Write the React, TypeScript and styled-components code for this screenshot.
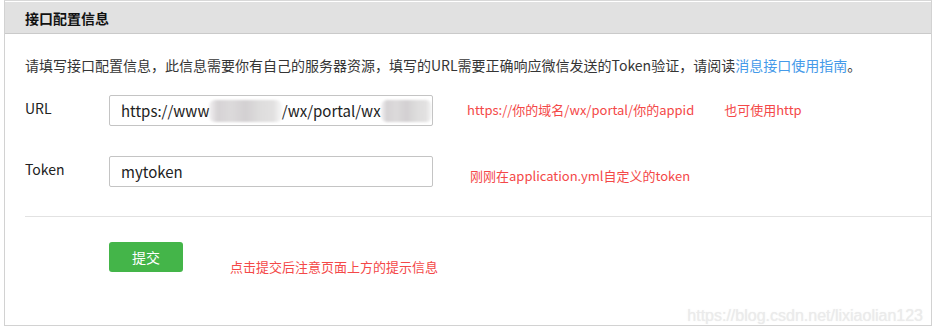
import React from "react";
import styled, { createGlobalStyle } from "styled-components";

const Global = createGlobalStyle`
  html, body { margin: 0; padding: 0; background: #fff; }
  body { font-family: "Noto Sans CJK SC", "Noto Sans", sans-serif; }
`;

const Page = styled.div`
  position: relative;
  width: 932px;
  height: 336px;
  overflow: hidden;
  background: #fff;
`;

const Panel = styled.div`
  margin-left: 4px;
  width: 926px;
  border: 1px solid #d2d2d2;
  border-top-color: #d8d8d8;
`;

const Header = styled.div`
  height: 31px;
  margin-top: 1px;
  background: #e1e1e1;
  border-bottom: 1px solid #cacaca;
  display: flex;
  align-items: center;
  padding-left: 20px;
  font-size: 14px;
  font-weight: 700;
  color: #111;
`;

const Body = styled.div`
  padding: 21px 0 49px 20px;
`;

const Desc = styled.p`
  margin: 0;
  font-size: 14px;
  line-height: 20px;
  color: #353535;
`;

const Link = styled.span`
  color: #459ae9;
`;

const Row = styled.div<{ $mt: number }>`
  display: flex;
  align-items: flex-start;
  margin-top: ${(p) => p.$mt}px;
`;

const Label = styled.div`
  width: 84px;
  height: 31px;
  display: flex;
  align-items: center;
  margin-top: -3px;
  font-size: 14px;
  color: #222;
`;

const Field = styled.div`
  box-sizing: border-box;
  width: 324px;
  height: 31px;
  border: 1px solid #c4c4c4;
  border-radius: 2px;
  display: flex;
  align-items: center;
  padding-left: 11px;
  font-size: 15px;
  color: #222;
  white-space: nowrap;
  overflow: hidden;
`;

const Blur = styled.span<{ $w: number }>`
  display: inline-block;
  width: ${(p) => p.$w}px;
  height: 22px;
  border-radius: 6px;
  background: linear-gradient(
    90deg,
    rgba(225, 222, 224, 0.4) 0%,
    #d6d3d5 12%,
    #dcdadb 30%,
    #d3d0d2 50%,
    #dedddd 70%,
    #e2e1e1 88%,
    rgba(230, 230, 230, 0.3) 100%
  );
  filter: blur(1px);
`;

const Note = styled.div<{ $ml: number; $mt: number }>`
  margin-left: ${(p) => p.$ml}px;
  margin-top: ${(p) => p.$mt}px;
  font-size: 13px;
  color: #f44848;
  white-space: nowrap;
`;

const Divider = styled.div`
  height: 1px;
  background: #e2e2e2;
  margin-top: 29px;
`;

const ButtonRow = styled.div`
  display: flex;
  align-items: flex-start;
  margin-top: 25px;
  padding-left: 84px;
`;

const SubmitButton = styled.button`
  width: 74px;
  height: 30px;
  border: none;
  border-radius: 3px;
  background: #44b549;
  color: #fff;
  font-family: inherit;
  font-size: 14px;
  padding: 0;
  cursor: pointer;
`;

const Watermark = styled.div`
  position: absolute;
  right: 9px;
  top: 307px;
  font-family: "Liberation Sans", Arial, sans-serif;
  font-size: 16px;
  color: #ebebeb;
  text-shadow: 0 0 1px rgba(215, 215, 215, 0.5);
`;

export default function App() {
  return (
    <>
      <Global />
      <Page>
        <Panel>
          <Header>接口配置信息</Header>
          <Body>
            <Desc>
              请填写接口配置信息，此信息需要你有自己的服务器资源，填写的URL需要正确响应微信发送的Token验证，请阅读
              <Link>消息接口使用指南</Link>。
            </Desc>
            <Row $mt={20}>
              <Label>URL</Label>
              <Field>
                https://www
                <Blur $w={76} />
                /wx/portal/wx
                <Blur $w={54} />
              </Field>
              <Note $ml={34} $mt={5}>https://你的域名/wx/portal/你的appid</Note>
              <Note $ml={30} $mt={5}>也可使用http</Note>
            </Row>
            <Row $mt={30}>
              <Label>Token</Label>
              <Field>mytoken</Field>
              <Note $ml={37} $mt={10}>刚刚在application.yml自定义的token</Note>
            </Row>
            <Divider />
            <ButtonRow>
              <SubmitButton>提交</SubmitButton>
              <Note $ml={47} $mt={15}>点击提交后注意页面上方的提示信息</Note>
            </ButtonRow>
          </Body>
        </Panel>
        <Watermark>https://blog.csdn.net/lixiaolian123</Watermark>
      </Page>
    </>
  );
}
